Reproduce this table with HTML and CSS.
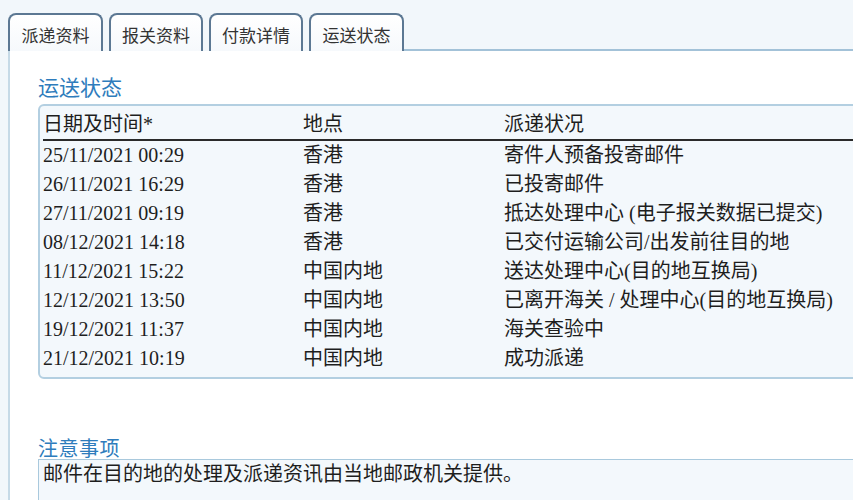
FILE: index.html
```html
<!DOCTYPE html>
<html lang="zh-CN">
<head>
<meta charset="utf-8">
<link rel="stylesheet" href="styles.css">
</head>
<body>
<div class="tabs">
  <div class="tab">派递资料</div>
  <div class="tab">报关资料</div>
  <div class="tab">付款详情</div>
  <div class="tab active">运送状态</div>
  <div class="tab-fill"></div>
</div>
<div class="panel">
  <h2 class="section-title">运送状态</h2>
  <div class="box">
    <table class="track">
      <thead>
        <tr><th class="c-date">日期及时间*</th><th class="c-loc">地点</th><th>派递状况</th></tr>
      </thead>
      <tbody>
        <tr><td>25/11/2021 00:29</td><td>香港</td><td>寄件人预备投寄邮件</td></tr>
        <tr><td>26/11/2021 16:29</td><td>香港</td><td>已投寄邮件</td></tr>
        <tr><td>27/11/2021 09:19</td><td>香港</td><td>抵达处理中心 (电子报关数据已提交)</td></tr>
        <tr><td>08/12/2021 14:18</td><td>香港</td><td>已交付运输公司/出发前往目的地</td></tr>
        <tr><td>11/12/2021 15:22</td><td>中国内地</td><td>送达处理中心(目的地互换局)</td></tr>
        <tr><td>12/12/2021 13:50</td><td>中国内地</td><td>已离开海关 / 处理中心(目的地互换局)</td></tr>
        <tr><td>19/12/2021 11:37</td><td>中国内地</td><td>海关查验中</td></tr>
        <tr><td>21/12/2021 10:19</td><td>中国内地</td><td>成功派递</td></tr>
      </tbody>
    </table>
  </div>
  <h2 class="section-title note-title">注意事项</h2>
  <div class="note">邮件在目的地的处理及派递资讯由当地邮政机关提供。</div>
</div>
</body>
</html>
```

FILE: styles.css
```css
html, body {
  margin: 0;
  padding: 0;
  height: 100%;
  overflow: hidden;
}
body {
  background: #f2f7fb;
  font-family: "Liberation Serif", "Noto Sans CJK SC", serif;
  color: #1e1e1e;
  display: flex;
  flex-direction: column;
}
.tabs {
  display: flex;
  align-items: stretch;
  gap: 6px;
  padding-left: 8px;
  margin-top: 13px;
  height: 38px;
  flex: none;
}
.tab {
  box-sizing: border-box;
  width: 95px;
  border: 2px solid #5c7893;
  border-bottom: none;
  border-radius: 8px 8px 0 0;
  background: linear-gradient(#ffffff, #f6f9fc);
  font-family: "Noto Sans CJK SC", sans-serif;
  font-size: 17px;
  color: #333;
  display: flex;
  align-items: center;
  justify-content: center;
  padding-top: 2px;
}
.tab:nth-child(2), .tab:nth-child(3) { width: 94px; }
.tab-fill {
  flex: 1;
  border-bottom: 2px solid #a3c2d8;
  margin-left: -6px;
}
.panel {
  flex: 1;
  min-height: 0;
  margin-left: 8px;
  border-left: 2px solid #c6dae7;
  background: #fff;
  padding-left: 28px;
}
.section-title {
  margin: 0;
  padding-top: 22px;
  font-family: "Noto Sans CJK SC", sans-serif;
  font-weight: normal;
  font-size: 21px;
  line-height: 26px;
  color: #2e7cbc;
  height: 31px;
  box-sizing: content-box;
}
.box {
  margin-right: -20px;
  border: 2px solid #b3cfe1;
  border-radius: 6px;
  background: #f3f8fc;
  padding: 0 0 4px 3px;
}
.track {
  border-collapse: collapse;
  width: 100%;
  font-size: 20px;
}
.track th {
  text-align: left;
  font-weight: normal;
  height: 33px;
  padding: 0;
  border-bottom: 2px solid #2a2a2a;
  vertical-align: middle;
}
.track td {
  height: 29px;
  padding: 0;
  line-height: 29px;
  white-space: nowrap;
}
.c-date { width: 260px; }
.c-loc { width: 201px; }
.note-title {
  padding-top: 56px;
  height: 24px;
  line-height: 26px;
  font-size: 20px;
  letter-spacing: 0.5px;
  position: relative;
  z-index: 1;
}
.note {
  border-top: 1px solid #a9c9dd;
  border-left: 1px solid #a9c9dd;
  background: #f3f8fc;
  padding: 1px 4px;
  font-size: 20px;
  line-height: 26px;
  height: 40px;
}
```
